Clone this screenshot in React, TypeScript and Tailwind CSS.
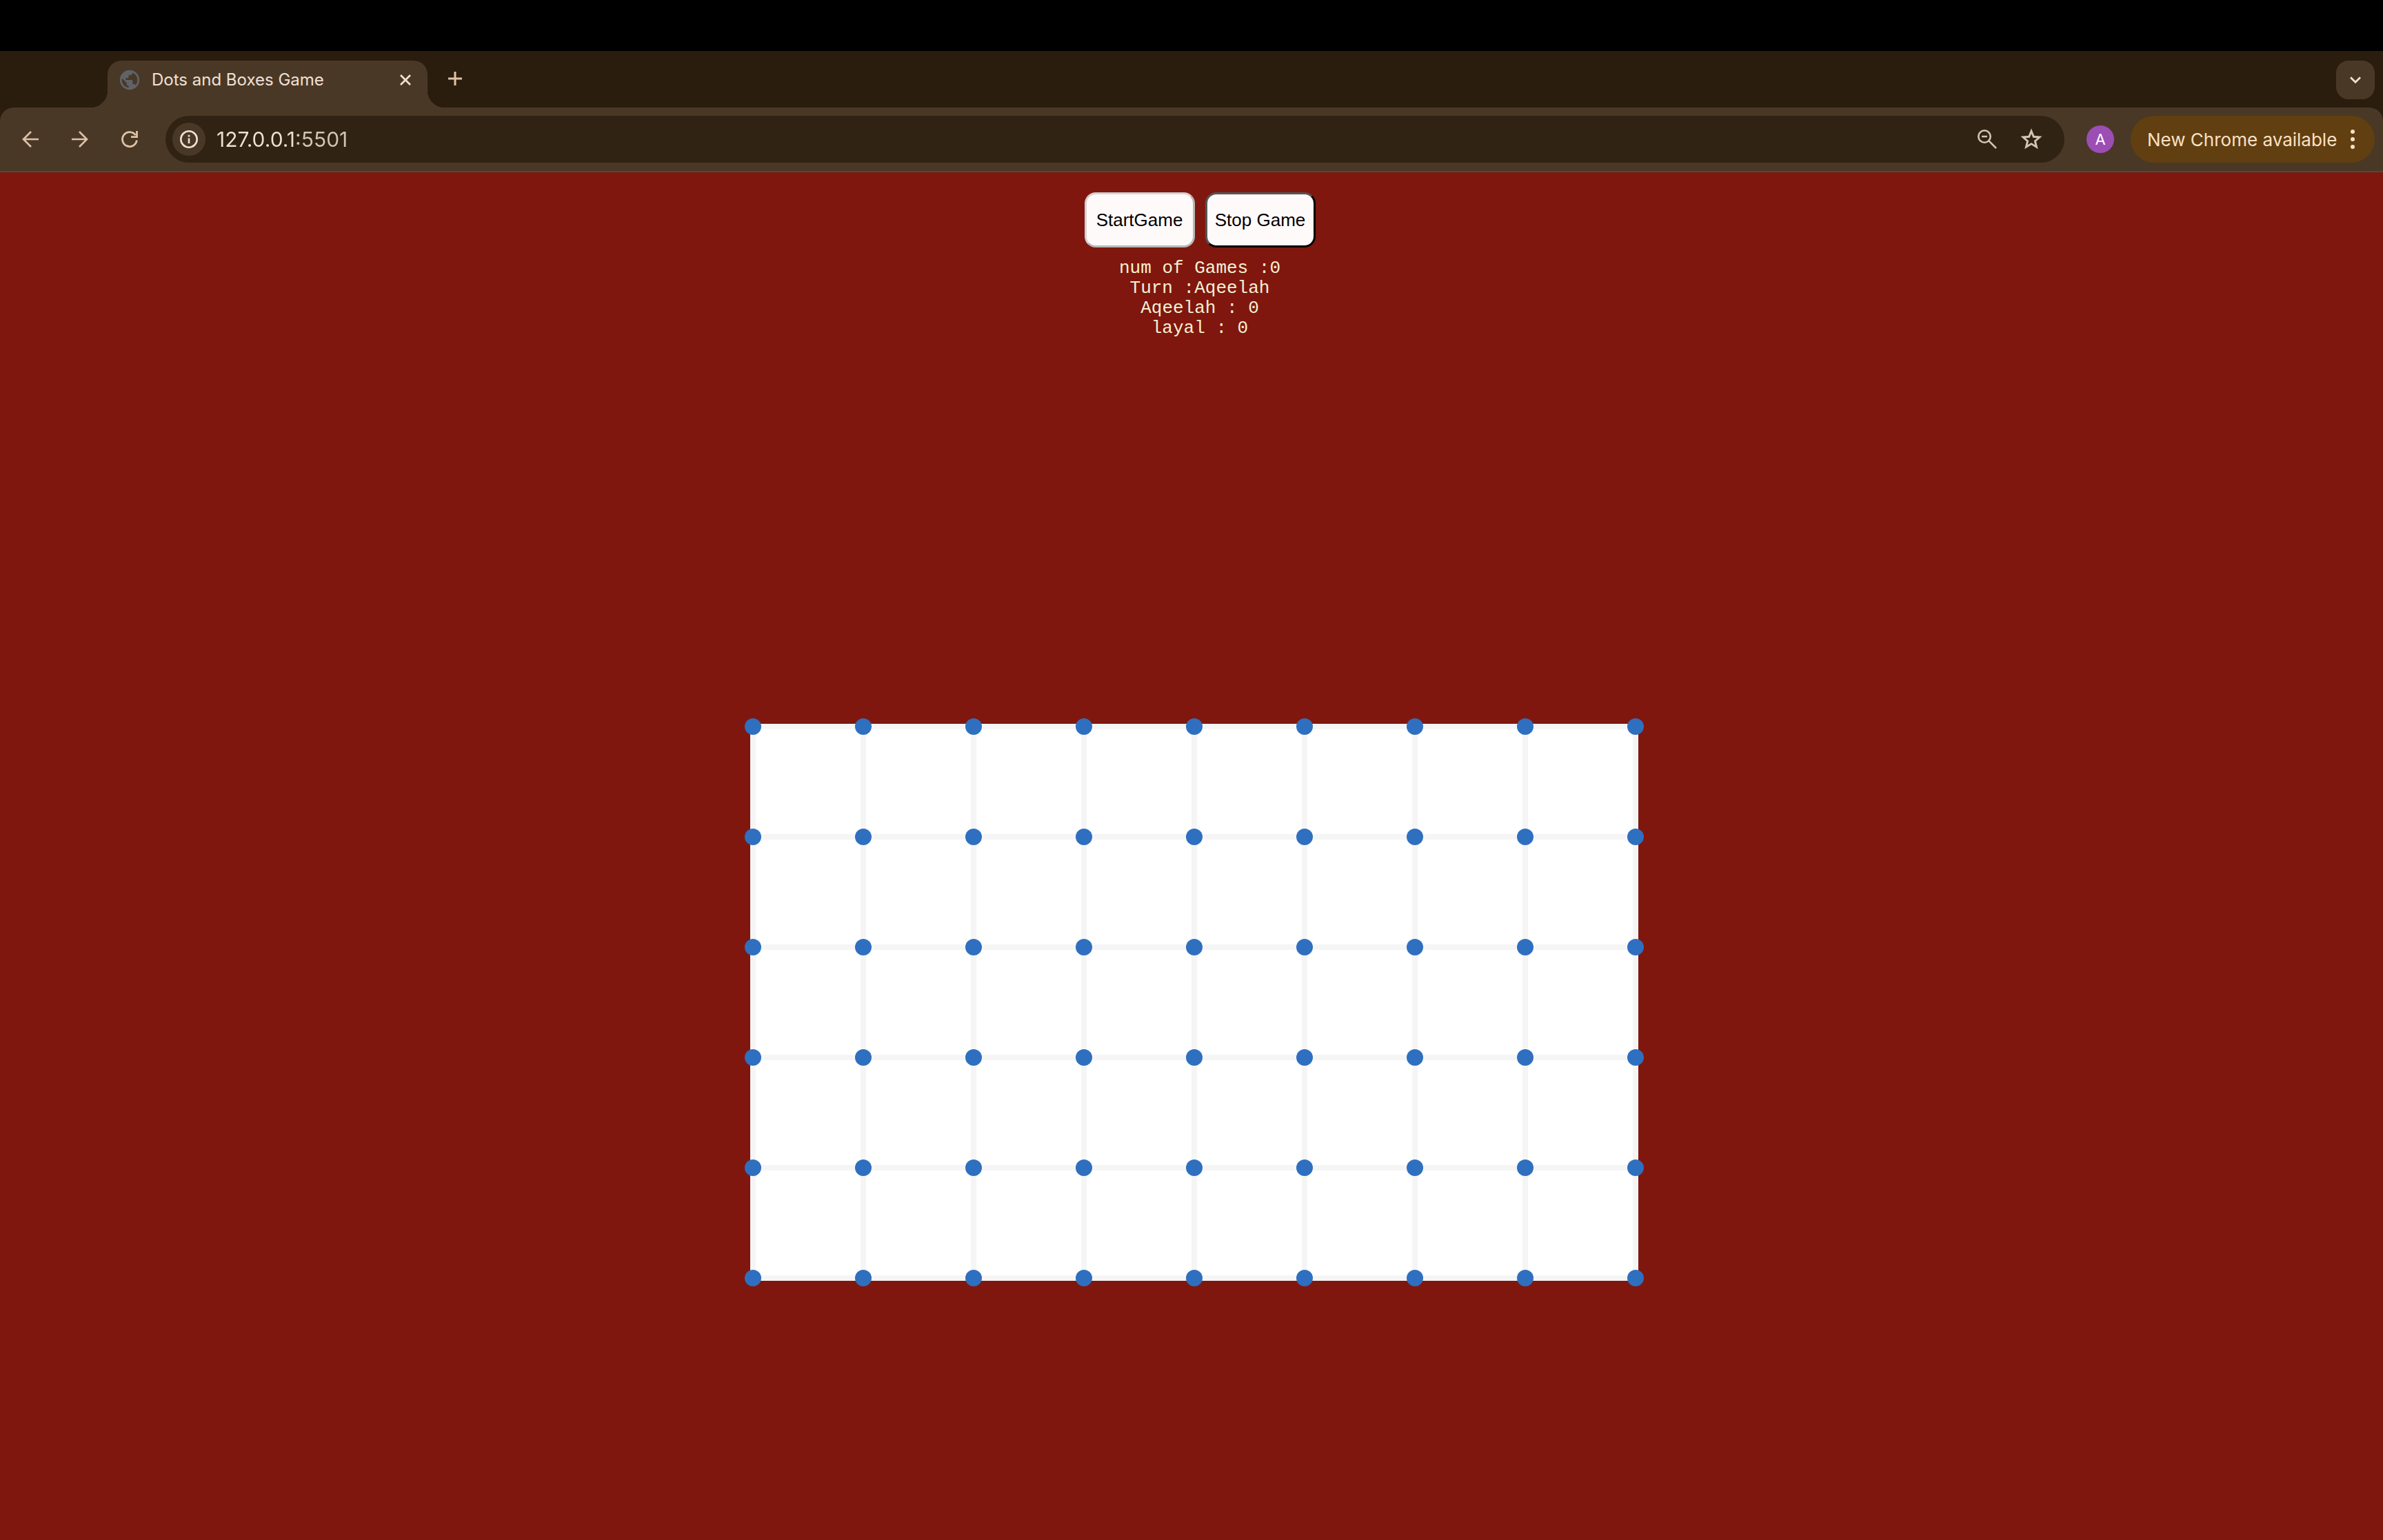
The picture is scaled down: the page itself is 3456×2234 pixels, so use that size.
import React from "react";
import { MdPublic } from "react-icons/md";

const COLUMNS = 8;
const ROWS = 5;

function BackIcon() {
  return (
    <svg aria-hidden="true" viewBox="0 0 24 24" className="size-6" fill="none" stroke="currentColor" strokeWidth="2.6">
      <path d="M24 12H2M13 1 2 12l11 11" />
    </svg>
  );
}

function ForwardIcon() {
  return (
    <svg aria-hidden="true" viewBox="0 0 24 24" className="size-6" fill="none" stroke="currentColor" strokeWidth="2.6">
      <path d="M0 12h22M11 1l11 11-11 11" />
    </svg>
  );
}

function ReloadIcon() {
  return (
    <svg aria-hidden="true" viewBox="0 0 24 24" className="size-6" fill="none" stroke="currentColor" strokeWidth="2.8">
      <path d="M22.4 13.5A10.5 10.5 0 1 1 20.6 6" />
      <path d="M22.5 0v8.6H14" />
    </svg>
  );
}

function InfoIcon() {
  return (
    <svg aria-hidden="true" viewBox="0 0 26 26" className="size-[26px]" fill="none" stroke="currentColor" strokeWidth="2.6">
      <circle cx="13" cy="13" r="11.7" />
      <path d="M13 11.5V19M13 6.8v2.6" />
    </svg>
  );
}

function ZoomOutIcon() {
  return (
    <svg aria-hidden="true" viewBox="0 0 28 28" className="size-7" fill="none" stroke="currentColor" strokeWidth="2.6">
      <circle cx="10" cy="10" r="8.7" />
      <path d="M6 10h8M16.2 16.2 27 27" />
    </svg>
  );
}

function StarIcon() {
  return (
    <svg aria-hidden="true" viewBox="0 0 32 32" className="size-8" fill="none" stroke="currentColor" strokeWidth="2.9">
      <path d="m16 4.2 3.3 8.1 8.7.7-6.6 5.7 2.1 8.5-7.5-4.6-7.5 4.6 2.1-8.5L4 13l8.7-.7z" />
    </svg>
  );
}

function CloseIcon() {
  return (
    <svg aria-hidden="true" viewBox="0 0 16 16" className="size-4" fill="none" stroke="currentColor" strokeWidth="2.8">
      <path d="m1 1 14 14M15 1 1 15" />
    </svg>
  );
}

function PlusIcon() {
  return (
    <svg aria-hidden="true" viewBox="0 0 20 20" className="size-5" fill="none" stroke="currentColor" strokeWidth="3">
      <path d="M10 0v20M0 10h20" />
    </svg>
  );
}

function ChevronIcon() {
  return (
    <svg aria-hidden="true" viewBox="0 0 16 10" className="h-[10px] w-4" fill="none" stroke="currentColor" strokeWidth="2.8">
      <path d="m1 1.2 7 7 7-7" />
    </svg>
  );
}

function MoreIcon() {
  return (
    <svg aria-hidden="true" viewBox="0 0 6 28" className="h-7 w-[6px]" fill="currentColor">
      <circle cx="3" cy="3" r="3" />
      <circle cx="3" cy="14" r="3" />
      <circle cx="3" cy="25" r="3" />
    </svg>
  );
}

function TabStrip() {
  return (
    <div className="flex h-[82px] items-end justify-between bg-[#2a1d0e] pr-3 pl-[156px]">
      <div className="flex items-end">
        <div className="relative flex h-[68px] w-[464px] items-start rounded-t-[20px] bg-[#4a3826] pt-2 pr-6 pl-[15px]">
          <span className="absolute bottom-0 -left-6 size-6 bg-[radial-gradient(circle_at_0_0,transparent_24px,#4a3826_24px)]" />
          <span className="absolute -right-6 bottom-0 size-6 bg-[radial-gradient(circle_at_100%_0,transparent_24px,#4a3826_24px)]" />
          <div className="flex h-10 flex-1 items-center">
            <MdPublic aria-hidden="true" className="size-[34px] text-[#5f6368]" />
            <span className="ml-[15px] flex-1 text-2xl text-[#f0e0d4]">Dots and Boxes Game</span>
            <button type="button" aria-label="Close tab" className="text-[#f0e0d4]">
              <CloseIcon />
            </button>
          </div>
        </div>
        <button type="button" aria-label="New tab" className="mb-[14px] ml-3 flex size-14 items-center justify-center text-[#dfc3a7]">
          <PlusIcon />
        </button>
      </div>
      <button
        type="button"
        aria-label="Search tabs"
        className="mb-3 flex size-14 items-center justify-center rounded-[18px] bg-[#4a3826] text-[#f0e0d4]"
      >
        <ChevronIcon />
      </button>
    </div>
  );
}

function Toolbar() {
  return (
    <div className="bg-[#2a1d0e]">
      <div className="flex h-[94px] items-center rounded-t-[20px] border-b-2 border-[#53463c] bg-[#4a3826] pr-3 pl-2">
        <div className="flex items-center text-[#dfc3a7]">
          <button type="button" aria-label="Back" className="flex size-[72px] items-center justify-center">
            <BackIcon />
          </button>
          <button type="button" aria-label="Forward" className="flex size-[72px] items-center justify-center">
            <ForwardIcon />
          </button>
          <button type="button" aria-label="Reload" className="flex size-[72px] items-center justify-center">
            <ReloadIcon />
          </button>
        </div>
        <div className="ml-4 flex h-[68px] flex-1 items-center rounded-full bg-[#312314] pr-8 pl-[10px] text-[#d2c4b8]">
          <button
            type="button"
            aria-label="Site information"
            className="flex size-12 items-center justify-center rounded-full bg-[#4a3826] text-[#f0e0d4]"
          >
            <InfoIcon />
          </button>
          <input
            type="text"
            aria-label="Address"
            defaultValue="127.0.0.1:5501"
            className="ml-4 h-12 flex-1 bg-linear-to-r from-[#f0e0d4] from-[115px] to-[#d2c4b8] to-[115px] bg-clip-text text-[30px] text-[#f0e0d4] outline-none [-webkit-text-fill-color:transparent]"
          />
          <button type="button" aria-label="Zoom" className="mr-[34px]">
            <ZoomOutIcon />
          </button>
          <button type="button" aria-label="Bookmark this page">
            <StarIcon />
          </button>
        </div>
        <button
          type="button"
          aria-label="Profile A"
          className="mr-6 ml-8 flex size-10 items-center justify-center rounded-full bg-[#9c4eb4] text-[22px] text-white"
        >
          A
        </button>
        <button
          type="button"
          className="flex h-[68px] w-[354px] items-center justify-between rounded-full bg-[#613f11] pr-[29px] pl-6 text-[26px] text-[#fce0c4]"
        >
          <span className="whitespace-nowrap">New Chrome available</span>
          <MoreIcon />
        </button>
      </div>
    </div>
  );
}

function Board() {
  return (
    <div className="relative">
      <div className="grid grid-cols-[repeat(8,152px)] gap-2 bg-[#f5f5f5] p-2">
        {Array.from({ length: COLUMNS * ROWS }, (_, i) => (
          <div key={i} className="h-[152px] bg-white" />
        ))}
      </div>
      <div className="absolute -inset-2 grid grid-cols-[repeat(9,24px)] grid-rows-[repeat(6,24px)] gap-[136px]">
        {Array.from({ length: (COLUMNS + 1) * (ROWS + 1) }, (_, i) => (
          <span key={i} className="rounded-full bg-[#2f6fc0]" />
        ))}
      </div>
    </div>
  );
}

function Game() {
  return (
    <main className="flex-1 bg-[#7f170e] pt-[29px]">
      <div className="flex flex-col items-center pl-6">
        <div className="flex gap-[15px] font-['Liberation_Sans',Arial,sans-serif] text-[26px] text-black">
          <button
            type="button"
            className="h-20 w-40 rounded-2xl border-3 border-t-[#d3d3d3] border-r-[#b8b8b8] border-b-[#b8b8b8] border-l-[#d3d3d3] bg-[#fffafa]"
          >
            StartGame
          </button>
          <button
            type="button"
            className="h-20 w-40 rounded-2xl border-3 border-t-[#555555] border-r-black border-b-black border-l-[#555555] bg-[#fffafa]"
          >
            Stop Game
          </button>
        </div>
        <div className="mt-4 text-center font-['Liberation_Mono','Courier_New',monospace] text-[26px] leading-[29px] text-[#f5f0d4]">
          <p>num of Games :0</p>
          <p>Turn :Aqeelah</p>
          <p>Aqeelah : 0</p>
          <p>layal : 0</p>
        </div>
      </div>
      <div className="mt-[559px] flex justify-center pl-2">
        <Board />
      </div>
    </main>
  );
}

export default function App() {
  return (
    <div className="flex min-h-screen flex-col bg-black pt-[74px] font-[Inter,sans-serif]">
      <TabStrip />
      <Toolbar />
      <Game />
    </div>
  );
}
